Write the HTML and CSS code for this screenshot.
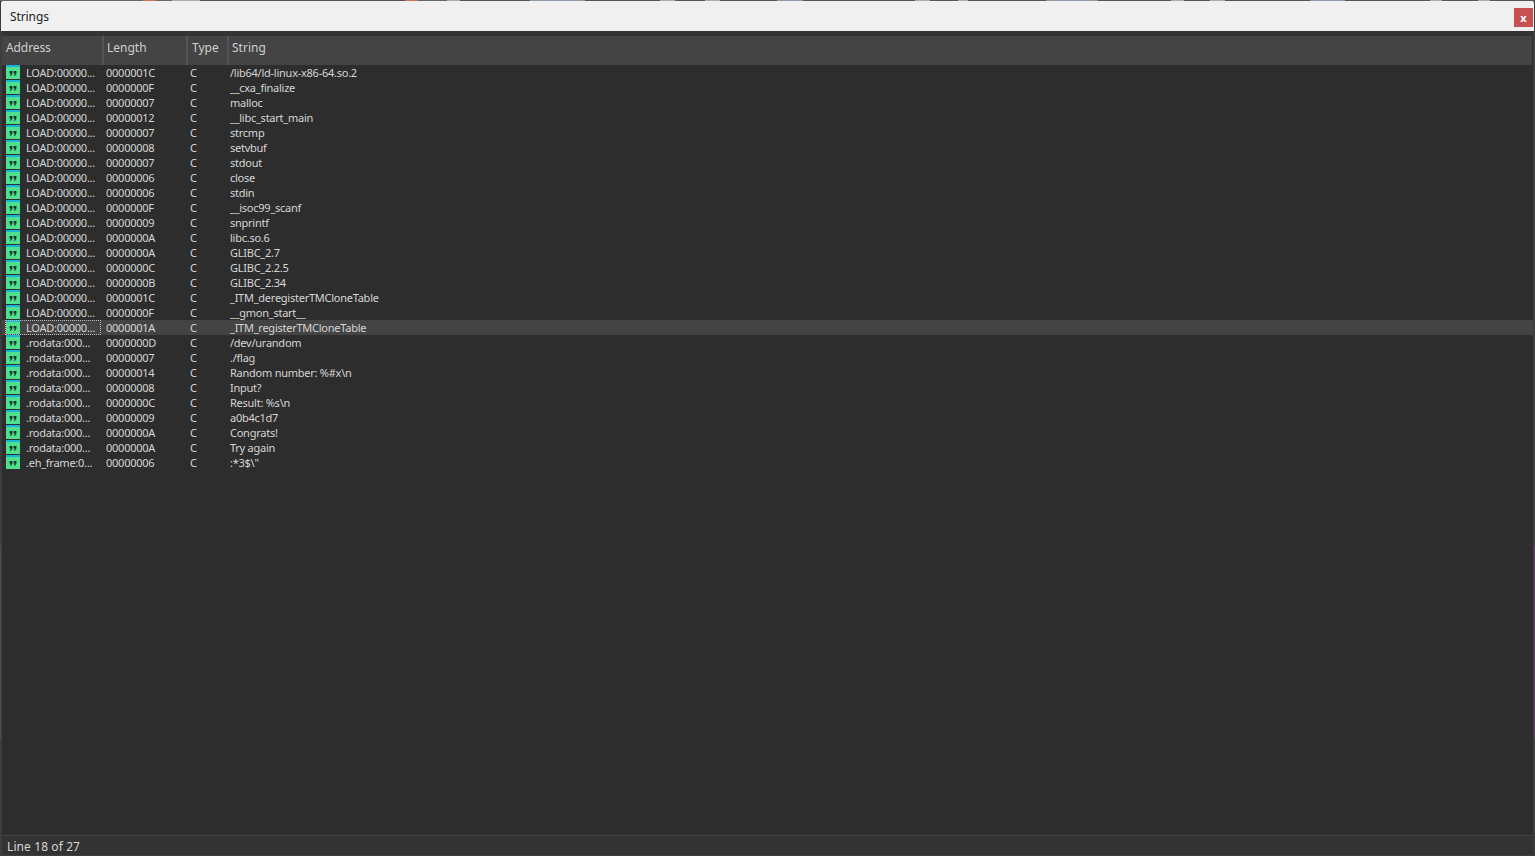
FILE: index.html
```html
<!DOCTYPE html>
<html lang="en">
<head>
<meta charset="utf-8">
<title>Strings</title>
<link rel="stylesheet" href="styles.css">
</head>
<body>
<svg class="defs" width="0" height="0" aria-hidden="true"><defs>
<symbol id="q" viewBox="0 0 14 15">
<rect x="0" y="0" width="14" height="2" fill="#19b5d8"/>
<rect x="0" y="2" width="14" height="12" fill="#4fe08f"/>
<path d="M3.6 6h2.8v2.6L5 10.8H4l.8-2.2H3.6zM7.6 6h2.8v2.6L9 10.8H8l.8-2.2H7.6z" fill="#14352a"/>
</symbol>
</defs></svg>
<div class="window">
  <div class="strip"></div>
  <div class="titlebar">
    <span class="title">Strings</span>
    <button class="close" type="button">x</button>
  </div>
  <div class="band"></div>
  <div class="grid">
    <div class="row head">
      <div class="c a">Address</div><div class="c l">Length</div><div class="c t">Type</div><div class="c s">String</div>
    </div>
    <div class="body">
      <div class="row"><div class="c a"><svg class="ico"><use href="#q"/></svg><span class="addr">LOAD:00000...</span></div><div class="c l">0000001C</div><div class="c t">C</div><div class="c s">/lib64/ld-linux-x86-64.so.2</div></div>
      <div class="row"><div class="c a"><svg class="ico"><use href="#q"/></svg><span class="addr">LOAD:00000...</span></div><div class="c l">0000000F</div><div class="c t">C</div><div class="c s">__cxa_finalize</div></div>
      <div class="row"><div class="c a"><svg class="ico"><use href="#q"/></svg><span class="addr">LOAD:00000...</span></div><div class="c l">00000007</div><div class="c t">C</div><div class="c s">malloc</div></div>
      <div class="row"><div class="c a"><svg class="ico"><use href="#q"/></svg><span class="addr">LOAD:00000...</span></div><div class="c l">00000012</div><div class="c t">C</div><div class="c s">__libc_start_main</div></div>
      <div class="row"><div class="c a"><svg class="ico"><use href="#q"/></svg><span class="addr">LOAD:00000...</span></div><div class="c l">00000007</div><div class="c t">C</div><div class="c s">strcmp</div></div>
      <div class="row"><div class="c a"><svg class="ico"><use href="#q"/></svg><span class="addr">LOAD:00000...</span></div><div class="c l">00000008</div><div class="c t">C</div><div class="c s">setvbuf</div></div>
      <div class="row"><div class="c a"><svg class="ico"><use href="#q"/></svg><span class="addr">LOAD:00000...</span></div><div class="c l">00000007</div><div class="c t">C</div><div class="c s">stdout</div></div>
      <div class="row"><div class="c a"><svg class="ico"><use href="#q"/></svg><span class="addr">LOAD:00000...</span></div><div class="c l">00000006</div><div class="c t">C</div><div class="c s">close</div></div>
      <div class="row"><div class="c a"><svg class="ico"><use href="#q"/></svg><span class="addr">LOAD:00000...</span></div><div class="c l">00000006</div><div class="c t">C</div><div class="c s">stdin</div></div>
      <div class="row"><div class="c a"><svg class="ico"><use href="#q"/></svg><span class="addr">LOAD:00000...</span></div><div class="c l">0000000F</div><div class="c t">C</div><div class="c s">__isoc99_scanf</div></div>
      <div class="row"><div class="c a"><svg class="ico"><use href="#q"/></svg><span class="addr">LOAD:00000...</span></div><div class="c l">00000009</div><div class="c t">C</div><div class="c s">snprintf</div></div>
      <div class="row"><div class="c a"><svg class="ico"><use href="#q"/></svg><span class="addr">LOAD:00000...</span></div><div class="c l">0000000A</div><div class="c t">C</div><div class="c s">libc.so.6</div></div>
      <div class="row"><div class="c a"><svg class="ico"><use href="#q"/></svg><span class="addr">LOAD:00000...</span></div><div class="c l">0000000A</div><div class="c t">C</div><div class="c s">GLIBC_2.7</div></div>
      <div class="row"><div class="c a"><svg class="ico"><use href="#q"/></svg><span class="addr">LOAD:00000...</span></div><div class="c l">0000000C</div><div class="c t">C</div><div class="c s">GLIBC_2.2.5</div></div>
      <div class="row"><div class="c a"><svg class="ico"><use href="#q"/></svg><span class="addr">LOAD:00000...</span></div><div class="c l">0000000B</div><div class="c t">C</div><div class="c s">GLIBC_2.34</div></div>
      <div class="row"><div class="c a"><svg class="ico"><use href="#q"/></svg><span class="addr">LOAD:00000...</span></div><div class="c l">0000001C</div><div class="c t">C</div><div class="c s">_ITM_deregisterTMCloneTable</div></div>
      <div class="row"><div class="c a"><svg class="ico"><use href="#q"/></svg><span class="addr">LOAD:00000...</span></div><div class="c l">0000000F</div><div class="c t">C</div><div class="c s">__gmon_start__</div></div>
      <div class="row sel"><div class="c a"><svg class="ico"><use href="#q"/></svg><span class="addr">LOAD:00000...</span></div><div class="c l">0000001A</div><div class="c t">C</div><div class="c s">_ITM_registerTMCloneTable</div></div>
      <div class="row"><div class="c a"><svg class="ico"><use href="#q"/></svg><span class="addr">.rodata:000...</span></div><div class="c l">0000000D</div><div class="c t">C</div><div class="c s">/dev/urandom</div></div>
      <div class="row"><div class="c a"><svg class="ico"><use href="#q"/></svg><span class="addr">.rodata:000...</span></div><div class="c l">00000007</div><div class="c t">C</div><div class="c s">./flag</div></div>
      <div class="row"><div class="c a"><svg class="ico"><use href="#q"/></svg><span class="addr">.rodata:000...</span></div><div class="c l">00000014</div><div class="c t">C</div><div class="c s">Random number: %#x\n</div></div>
      <div class="row"><div class="c a"><svg class="ico"><use href="#q"/></svg><span class="addr">.rodata:000...</span></div><div class="c l">00000008</div><div class="c t">C</div><div class="c s">Input?</div></div>
      <div class="row"><div class="c a"><svg class="ico"><use href="#q"/></svg><span class="addr">.rodata:000...</span></div><div class="c l">0000000C</div><div class="c t">C</div><div class="c s">Result: %s\n</div></div>
      <div class="row"><div class="c a"><svg class="ico"><use href="#q"/></svg><span class="addr">.rodata:000...</span></div><div class="c l">00000009</div><div class="c t">C</div><div class="c s">a0b4c1d7</div></div>
      <div class="row"><div class="c a"><svg class="ico"><use href="#q"/></svg><span class="addr">.rodata:000...</span></div><div class="c l">0000000A</div><div class="c t">C</div><div class="c s">Congrats!</div></div>
      <div class="row"><div class="c a"><svg class="ico"><use href="#q"/></svg><span class="addr">.rodata:000...</span></div><div class="c l">0000000A</div><div class="c t">C</div><div class="c s">Try again</div></div>
      <div class="row"><div class="c a"><svg class="ico"><use href="#q"/></svg><span class="addr">.eh_frame:0...</span></div><div class="c l">00000006</div><div class="c t">C</div><div class="c s">:*3$\"</div></div>
    </div>
  </div>
  <div class="status">Line 18 of 27</div>
</div>
</body>
</html>
```
FILE: styles.css
```css
* { box-sizing: border-box; }
html, body { height: 100%; }
body {
  margin: 0;
  overflow: hidden;
  background: linear-gradient(to bottom, #3c3c3c 0 545px, #5a4060 545px 740px, #3c3c3c 740px);
  color: #d6d6d6;
  font-family: "Noto Sans", "Liberation Sans", sans-serif;
  font-size: 11px;
  letter-spacing: -0.25px;
}
.defs { display: block; height: 0; }
.window {
  height: 856px;
  margin: 0 1px;
  background: #2d2d2d;
  display: flex;
  flex-direction: column;
  border-left: 1px solid #3e3e3e;
  border-right: 1px solid #3e3e3e;
}
.strip {
  height: 1px;
  flex: none;
  margin: 0 -2px;
  background: linear-gradient(to right,
    #666 0 143px, #c8735a 143px 156px, #666 156px 172px, #aaa 172px 200px, #555 200px 405px,
    #c8735a 405px 418px, #666 418px 447px, #aaa 447px 460px, #555 460px 530px,
    #8f9aa8 530px 585px, #555 585px 660px, #aaa 660px 675px, #555 675px 705px, #aaa 705px 720px,
    #555 720px 777px, #8f9aa8 777px 803px, #555 803px 915px, #aaa 915px 930px, #555 930px 958px,
    #aaa 958px 968px, #555 968px 1046px, #8f9aa8 1046px 1098px, #555 1098px 1171px, #aaa 1171px 1184px,
    #555 1184px 1210px, #aaa 1210px 1225px, #555 1225px 1310px, #8f9aa8 1310px 1345px, #555 1345px 1430px,
    #aaa 1430px 1442px, #555 1442px 1478px, #aaa 1478px 1490px, #555 1490px);
}
.titlebar {
  height: 30px;
  flex: none;
  margin: 0 -1px;
  background: #f0f0f0;
  color: #222;
  display: flex;
  align-items: center;
  justify-content: space-between;
  padding: 0 1px 0 9px;
  font-size: 12px;
  letter-spacing: -0.1px;
  border-top-left-radius: 2px;
  border-top-right-radius: 2px;
}
.close {
  width: 19px;
  height: 19px;
  margin-top: 2px;
  padding: 0;
  border: 0;
  background: #c75050;
  color: #fff;
  font: bold 11px/17px "Noto Sans", sans-serif;
}
.band { height: 5px; flex: none; background: #333; }
.grid { flex: 1; min-height: 0; display: flex; flex-direction: column; }
.row { display: flex; height: 15px; align-items: center; line-height: 15px; white-space: nowrap; }
.c { flex: none; }
.a { width: 96px; margin: 0 3px; display: flex; align-items: center; padding-left: 1px; height: 15px; }
.l { width: 84px; padding-left: 2px; }
.t { width: 41px; padding-left: 2px; }
.s { flex: 1; padding-left: 1px; }
.head {
  height: 29px;
  background: #444;
  color: #cfcfcf;
  font-size: 12px;
  letter-spacing: 0;
  align-items: stretch;
  line-height: 24px;
  margin-right: 1px;
}
.head .c { display: block; border-right: 2px solid #555; height: 29px; padding-left: 3px; }
.head .a { width: 102px; margin: 0; padding-left: 4px; letter-spacing: -0.1px; }
.head .t { padding-left: 4px; }
.head .s { border-right: 0; }
.ico { width: 14px; height: 15px; flex: none; }
.addr { margin-left: 6px; }
.sel { background: #444; }
.sel .a { outline: 1px dotted #bbb; outline-offset: -1px; }
.status {
  height: 21px;
  flex: none;
  background: #333;
  border-top: 1px solid #444;
  border-bottom: 1px solid #3e3e3e;
  padding: 1px 0 0 5px;
  font-size: 12px;
  letter-spacing: 0.1px;
  line-height: 19px;
}
```
